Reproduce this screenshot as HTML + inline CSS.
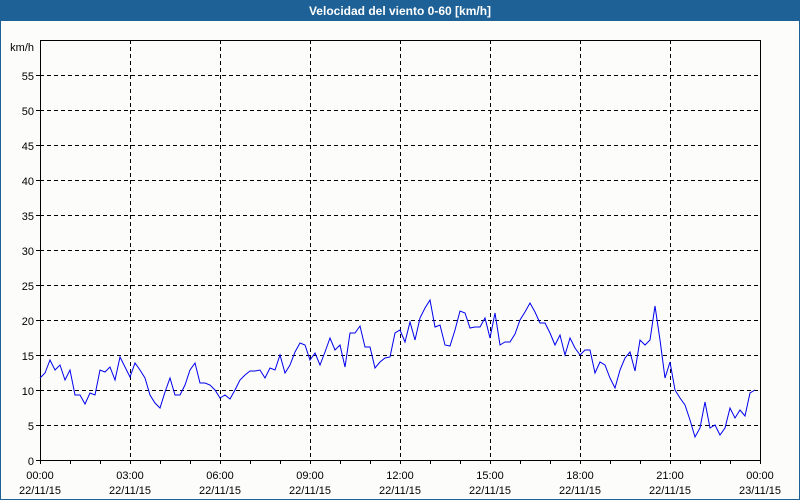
<!DOCTYPE html>
<html><head><meta charset="utf-8"><style>
html,body{margin:0;padding:0;width:800px;height:500px;overflow:hidden;background:#fcfdfb;font-family:"Liberation Sans","DejaVu Sans",sans-serif}
</style></head><body>
<svg width="800" height="500" xmlns="http://www.w3.org/2000/svg" style="position:absolute;left:0;top:0">
<rect x="0" y="0" width="800" height="500" fill="#fcfdfb"/>
<rect x="0" y="0" width="800" height="21" fill="#1d6196"/>
<rect x="0" y="0" width="1" height="500" fill="#1d6196"/>
<rect x="799" y="0" width="1" height="500" fill="#1d6196"/>
<rect x="0" y="499" width="800" height="1" fill="#1d6196"/>
<text x="400" y="15" fill="#fff" font-size="12" font-weight="bold" text-anchor="middle">Velocidad del viento 0-60 [km/h]</text>
<g stroke="#000" stroke-width="1" stroke-dasharray="4,3" shape-rendering="crispEdges">
<line x1="130.5" y1="40" x2="130.5" y2="460"/><line x1="220.5" y1="40" x2="220.5" y2="460"/><line x1="310.5" y1="40" x2="310.5" y2="460"/><line x1="400.5" y1="40" x2="400.5" y2="460"/><line x1="490.5" y1="40" x2="490.5" y2="460"/><line x1="580.5" y1="40" x2="580.5" y2="460"/><line x1="670.5" y1="40" x2="670.5" y2="460"/>
<line x1="40" y1="75.5" x2="760" y2="75.5"/><line x1="40" y1="110.5" x2="760" y2="110.5"/><line x1="40" y1="145.5" x2="760" y2="145.5"/><line x1="40" y1="180.5" x2="760" y2="180.5"/><line x1="40" y1="215.5" x2="760" y2="215.5"/><line x1="40" y1="250.5" x2="760" y2="250.5"/><line x1="40" y1="285.5" x2="760" y2="285.5"/><line x1="40" y1="320.5" x2="760" y2="320.5"/><line x1="40" y1="355.5" x2="760" y2="355.5"/><line x1="40" y1="390.5" x2="760" y2="390.5"/><line x1="40" y1="425.5" x2="760" y2="425.5"/>
</g>
<g stroke="#000" stroke-width="1" shape-rendering="crispEdges">
<rect x="40.5" y="40.5" width="720" height="420" fill="none"/>
<path d="M36 460.5H40M36 425.5H40M36 390.5H40M36 355.5H40M36 320.5H40M36 285.5H40M36 250.5H40M36 215.5H40M36 180.5H40M36 145.5H40M36 110.5H40M36 75.5H40
M70.5 460V464M100.5 460V464M130.5 460V464M160.5 460V464M190.5 460V464M220.5 460V464M250.5 460V464M280.5 460V464M310.5 460V464M340.5 460V464M370.5 460V464M400.5 460V464M430.5 460V464M460.5 460V464M490.5 460V464M520.5 460V464M550.5 460V464M580.5 460V464M610.5 460V464M640.5 460V464M670.5 460V464M700.5 460V464M730.5 460V464M760.5 460V464M40.5 460V464"/>
</g>
<polyline fill="none" stroke="#0000ee" stroke-width="1" points="40,378 45,373 50,360 55,370 60,365 65,380 70,370 75,395 80,395 85,404 90,393 95,395 100,370 105,372 110,367 115,380 120,357 125,367 130,377 135,363 140,370 145,378 150,395 155,403 160,408 165,392 170,378 175,395 180,395 185,385 190,370 195,363 200,383 205,383 210,385 215,390 220,398 225,395 230,399 235,390 240,380 245,375 250,371 255,371 260,370 265,378 270,368 275,370 280,355 285,373 290,365 295,352 300,343 305,345 310,360 315,353 320,365 325,352 330,338 335,350 340,345 345,367 350,333 355,333 360,326 365,347 370,347 375,368 380,362 385,358 390,357 395,333 400,330 405,342 410,322 415,340 420,318 425,308 430,300 435,327 440,325 445,345 450,346 455,330 460,311 465,313 470,328 475,327 480,327 485,318 490,338 495,313 500,345 505,342 510,342 515,334 520,320 525,312 530,303 535,312 540,323 545,323 550,333 555,345 560,335 565,355 570,338 575,348 580,355 585,350 590,350 595,373 600,362 605,365 610,378 615,388 620,370 625,358 630,352 635,371 640,340 645,345 650,340 655,306 660,340 665,378 670,362 675,390 680,398 685,405 690,420 695,437 700,428 705,402 710,428 715,425 720,435 725,428 730,408 735,418 740,410 745,416 750,393 755,390"/>
<g font-size="11" fill="#000" text-anchor="end">
<text x="34" y="51">km/h</text>
<text x="34" y="80">55</text><text x="34" y="115">50</text><text x="34" y="150">45</text><text x="34" y="185">40</text><text x="34" y="220">35</text><text x="34" y="255">30</text><text x="34" y="290">25</text><text x="34" y="325">20</text><text x="34" y="360">15</text><text x="34" y="395">10</text><text x="34" y="430">5</text><text x="34" y="465">0</text>
</g>
<g font-size="11" fill="#000" text-anchor="middle">
<text x="40" y="479">00:00</text><text x="40" y="494">22/11/15</text>
<text x="130" y="479">03:00</text><text x="130" y="494">22/11/15</text>
<text x="220" y="479">06:00</text><text x="220" y="494">22/11/15</text>
<text x="310" y="479">09:00</text><text x="310" y="494">22/11/15</text>
<text x="400" y="479">12:00</text><text x="400" y="494">22/11/15</text>
<text x="490" y="479">15:00</text><text x="490" y="494">22/11/15</text>
<text x="580" y="479">18:00</text><text x="580" y="494">22/11/15</text>
<text x="670" y="479">21:00</text><text x="670" y="494">22/11/15</text>
<text x="760" y="479">00:00</text><text x="760" y="494">23/11/15</text>
</g>
</svg>
</body></html>
